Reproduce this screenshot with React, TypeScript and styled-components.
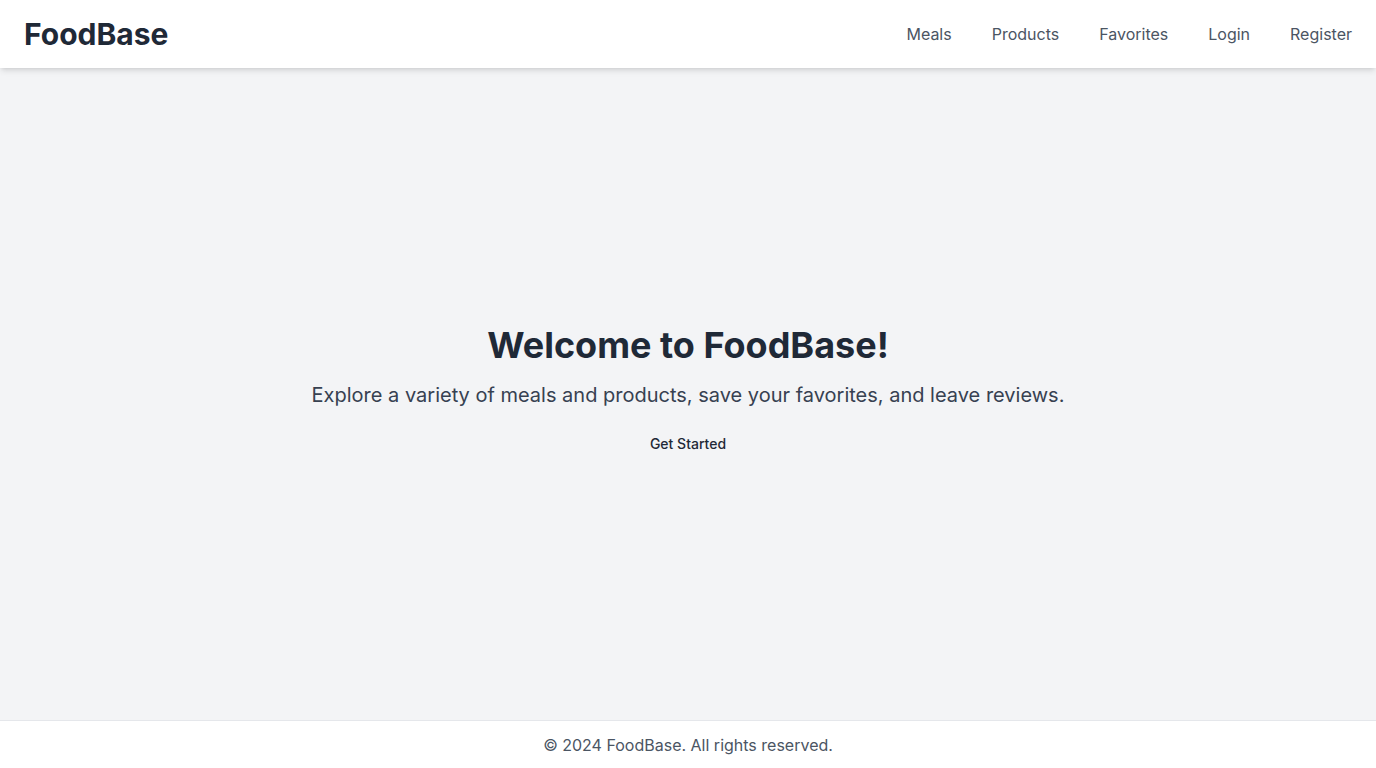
import React from "react";
import styled, { createGlobalStyle } from "styled-components";

const Global = createGlobalStyle`
  html, body { margin: 0; padding: 0; }
  body { font-family: Inter, "Noto Sans", sans-serif; background: #f3f4f6; }
  * { box-sizing: border-box; }
`;

const Page = styled.div`
  display: flex;
  flex-direction: column;
  min-height: 100vh;
`;

const Header = styled.header`
  display: flex;
  align-items: center;
  justify-content: space-between;
  background: #ffffff;
  padding: 16px 24px;
  box-shadow: 0 4px 6px -1px rgba(0,0,0,0.1), 0 2px 4px -2px rgba(0,0,0,0.1);
  position: relative;
  z-index: 1;
`;

const Logo = styled.div`
  font-size: 30px;
  line-height: 36px;
  font-weight: 700;
  color: #1f2937;
`;

const Nav = styled.nav`
  display: flex;
  gap: 40px;
`;

const NavLink = styled.a`
  font-size: 16px;
  line-height: 24px;
  color: #4b5563;
  text-decoration: none;
  cursor: pointer;
`;

const Main = styled.main`
  flex: 1;
  display: flex;
  flex-direction: column;
  align-items: center;
  justify-content: center;
  text-align: center;
`;

const Title = styled.h1`
  margin: 0 0 16px;
  font-size: 36px;
  line-height: 40px;
  font-weight: 700;
  color: #1f2937;
`;

const Subtitle = styled.p`
  margin: 0 0 16px;
  font-size: 20px;
  line-height: 28px;
  color: #374151;
`;

const Button = styled.button`
  background: transparent;
  border: none;
  padding: 9px 16px;
  font-family: inherit;
  font-size: 14px;
  line-height: 20px;
  font-weight: 500;
  color: #1f2937;
  cursor: pointer;
`;

const Footer = styled.footer`
  background: #ffffff;
  border-top: 1px solid #e5e7eb;
  padding: 12px 24px 11px;
  text-align: center;
  font-size: 16px;
  line-height: 24px;
  color: #4b5563;
`;

export default function App() {
  return (
    <Page>
      <Global />
      <Header>
        <Logo>FoodBase</Logo>
        <Nav>
          {["Meals", "Products", "Favorites", "Login", "Register"].map((l) => (
            <NavLink key={l}>{l}</NavLink>
          ))}
        </Nav>
      </Header>
      <Main>
        <Title>Welcome to FoodBase!</Title>
        <Subtitle>Explore a variety of meals and products, save your favorites, and leave reviews.</Subtitle>
        <Button>Get Started</Button>
      </Main>
      <Footer>© 2024 FoodBase. All rights reserved.</Footer>
    </Page>
  );
}
